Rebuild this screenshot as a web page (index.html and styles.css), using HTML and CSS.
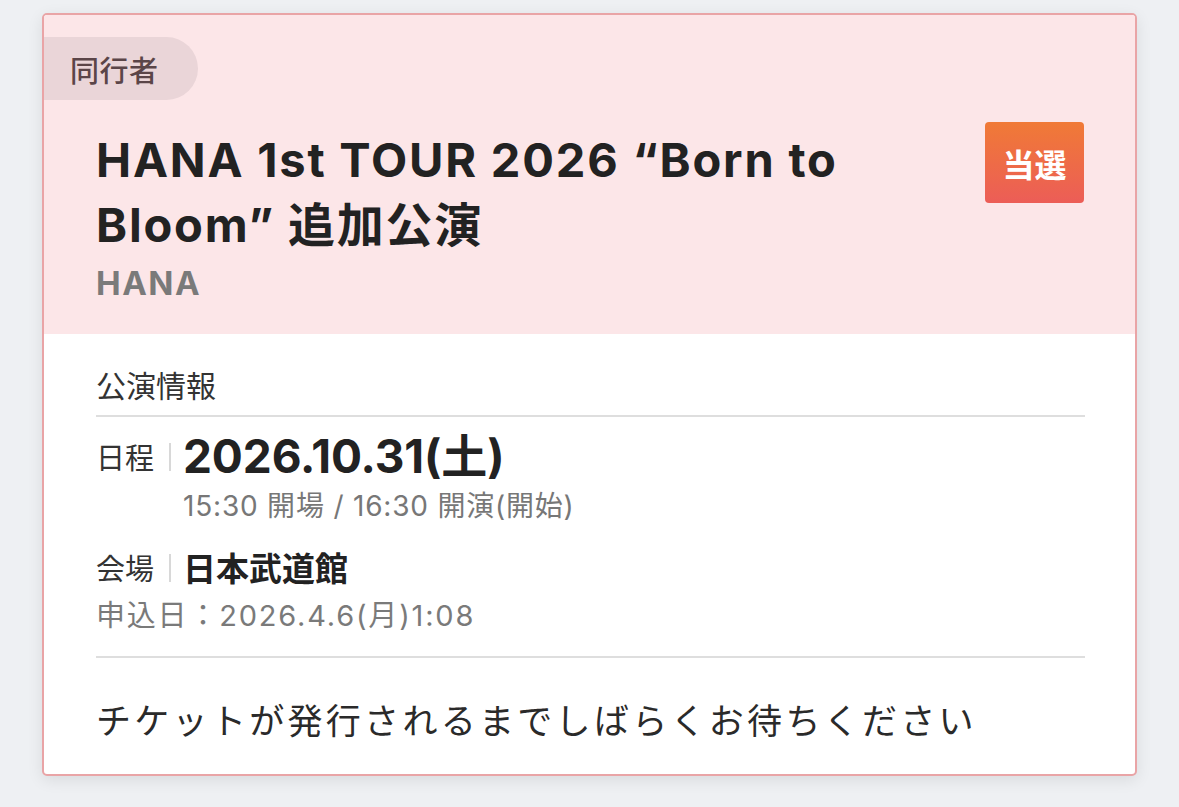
FILE: index.html
```html
<!DOCTYPE html>
<html lang="ja">
<head>
<meta charset="utf-8">
<link rel="stylesheet" href="styles.css">
</head>
<body>
<div class="page">
  <div class="card">
    <div class="head">
      <div class="tag">同行者</div>
      <div class="head-main">
        <div class="titles">
          <h1 class="title">HANA 1st TOUR 2026 “Born to Bloom” 追加公演</h1>
          <div class="artist">HANA</div>
        </div>
        <div class="badge">当選</div>
      </div>
    </div>
    <div class="body">
      <div class="section-title">公演情報</div>
      <div class="rows">
        <div class="row">
          <div class="label">日程</div>
          <div class="value">
            <div class="date">2026.10.31(土)</div>
            <div class="time">15:30 開場 / 16:30 開演(開始)</div>
          </div>
        </div>
        <div class="row venue-row">
          <div class="label">会場</div>
          <div class="value">
            <div class="venue">日本武道館</div>
          </div>
        </div>
        <div class="applied">申込日：2026.4.6(月)1:08</div>
      </div>
      <div class="notice">チケットが発行されるまでしばらくお待ちください</div>
    </div>
  </div>
</div>
</body>
</html>
```
FILE: styles.css
```css
* { box-sizing: border-box; }
html, body { margin: 0; padding: 0; }
body {
  background: #eef0f3;
  font-family: Inter, "Noto Sans CJK JP", sans-serif;
  color: #222;
}
.page {
  padding: 13px 42px 0 42px;
  height: 807px;
}
.card {
  width: 1095px;
  height: 763px;
  border: 2px solid #e9a4a6;
  border-radius: 5px;
  background: #fff;
  overflow: hidden;
  box-shadow: 0 4px 16px rgba(0,0,0,0.09);
}
.head {
  background: #fce6e8;
  height: 319px;
  padding-top: 22px;
}
.tag {
  display: inline-flex;
  align-items: center;
  height: 63px;
  width: 154px;
  padding-left: 26px;
  background: #ead5d8;
  border-radius: 0 32px 32px 0;
  color: #5b4548;
  font-size: 29px;
  font-weight: 500;
  letter-spacing: 0.5px;
  font-family: "Noto Sans CJK JP", sans-serif;
}
.head-main {
  display: flex;
  justify-content: space-between;
  align-items: flex-start;
  padding: 27px 51px 0 52px;
}
.titles { width: 820px; }
.title {
  margin: 0;
  font-size: 47px;
  line-height: 65px;
  font-weight: 700;
  color: #222;
  letter-spacing: 1.8px;
}
.artist {
  margin-top: 4px;
  font-size: 33px;
  font-weight: 700;
  color: #7a7a7a;
  line-height: 44px;
  letter-spacing: 1.5px;
}
.badge {
  margin-top: -5px;
  width: 99px;
  height: 81px;
  border-radius: 4px;
  background: linear-gradient(#f07a36, #ec5d57);
  color: #fff;
  display: flex;
  align-items: center;
  justify-content: center;
  font-size: 32px;
  font-weight: 700;
  font-family: "Noto Sans CJK JP", sans-serif;
}
.body {
  padding: 30px 50px 0 52px;
}
.section-title {
  font-size: 30px;
  line-height: 40px;
  color: #333;
  padding-bottom: 11px;
  border-bottom: 2px solid #dedede;
  font-family: "Noto Sans CJK JP", sans-serif;
}
.rows {
  padding-top: 14px;
  padding-bottom: 20px;
  border-bottom: 2px solid #dedede;
}
.row {
  display: flex;
  align-items: flex-start;
}
.label {
  font-size: 29px;
  line-height: 50px;
  color: #333;
  font-family: "Noto Sans CJK JP", sans-serif;
  position: relative;
  width: 87px;
  flex: none;
}
.label::after {
  content: "";
  position: absolute;
  left: 73px;
  top: 12px;
  width: 1.5px;
  height: 28px;
  background: #d8d8d8;
}
.venue-row .label { line-height: 44px; }
.venue-row .label::after { top: 9px; }
.date {
  font-size: 46px;
  font-weight: 700;
  line-height: 50px;
  color: #222;
  letter-spacing: -0.1px;
}
.time {
  font-size: 28px;
  line-height: 36px;
  margin-top: 7px;
  color: #777;
  letter-spacing: 0.8px;
}
.venue-row { margin-top: 21px; }
.venue {
  font-size: 33px;
  line-height: 44px;
  font-weight: 700;
  color: #222;
  font-family: "Noto Sans CJK JP", sans-serif;
}
.applied {
  font-size: 29px;
  line-height: 40px;
  color: #7a7a7a;
  margin-top: 7px;
  letter-spacing: 1.8px;
}
.notice {
  padding-top: 36px;
  font-size: 35px;
  line-height: 50px;
  color: #2a2a2a;
  letter-spacing: 3.3px;
  font-family: "Noto Sans CJK JP", sans-serif;
}
```
